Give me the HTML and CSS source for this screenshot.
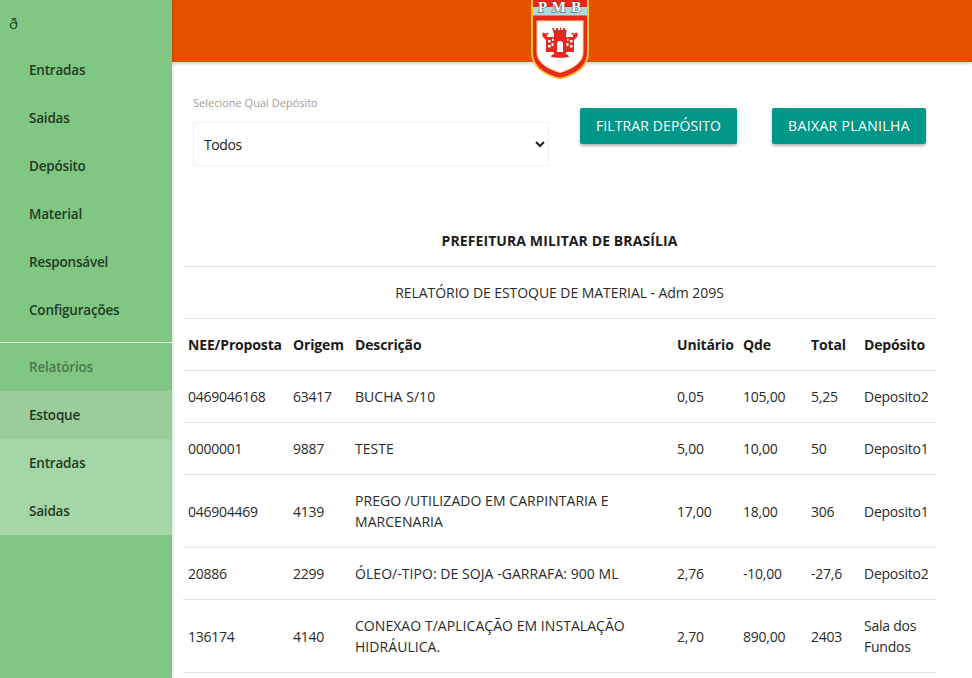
FILE: index.html
```html
<!DOCTYPE html>
<html lang="pt-BR">
<head>
<meta charset="utf-8">
<title>Relatório de Estoque</title>
<link rel="stylesheet" href="styles.css">
</head>
<body>
<div class="app">
  <aside class="sidebar">
    <div class="toggle">ð</div>
    <nav class="menu">
      <a class="item">Entradas</a>
      <a class="item">Saidas</a>
      <a class="item">Depósito</a>
      <a class="item">Material</a>
      <a class="item">Responsável</a>
      <a class="item">Configurações</a>
    </nav>
    <div class="divider"></div>
    <a class="item muted">Relatórios</a>
    <div class="submenu">
      <a class="item active">Estoque</a>
      <a class="item">Entradas</a>
      <a class="item">Saidas</a>
    </div>
  </aside>
  <div class="content">
    <header class="topbar">
      <svg class="crest" viewBox="0 0 58 80" width="58" height="80" aria-label="Brasão PMB">
        <path d="M0 0H58V52C58 68 44 76 29 79.500C14 76 0 68 0 52Z" fill="#f5c32c"/>
        <path d="M2 0H56V52C56 67 43 74.500 29 77.500C15 74.500 2 67 2 52Z" fill="#e8261a"/>
        <rect x="2" y="7" width="54" height="8.500" fill="#a9dbe0"/>
        <text class="crest-text" x="29" y="12" text-anchor="middle">P M B</text>
        <path d="M5.500 20.500H52.500V52C52.500 63 41 69.500 29 73C17 69.500 5.500 63 5.500 52Z" fill="#fbdf8a"/>
        <path d="M6.500 21.500H51.500V52C51.500 62 40.500 68.500 29 72C17.500 68.500 6.500 62 6.500 52Z" fill="#fff"/>
        <path d="M21 28L23 28V30H25V28H27V30H29V27.500H30V30H32V28H34V30H35.500V28L36 28L35 34V37H42V35L40 33.500L42 32.500L43 34L45 32.500L47 33.500L46 37L43 40V52H35V54H23V52H15V40L12 37L11 33.500L13 32.500L15 34L16 32.500L18 33.500L16 35V37H23V34Z" fill="#e3281f"/>
        <path d="M17 40h2.500v2.500h-2.500zM21 38.500h1.500v2.500h-1.500zM17 45h2.500v2.500h-2.500zM20.500 43h2v3h-2zM36 38.500h1.500v2.500h-1.500zM39 40h2.500v2.500h-2.500zM35.500 43h2v3h-2zM39 45h2.500v2.500h-2.500z" fill="#fff"/>
        <path d="M26 52V44A3 3 0 0 1 32 44V52Z" fill="#fff"/>
        <path d="M20 57C20 51.500 38 51.500 38 57C34 58 24 58 20 57Z" fill="#e3281f"/>
      </svg>
    </header>
    <main class="page">
      <form class="filters">
        <div class="field">
          <label class="field-label" for="deposito">Selecione Qual Depósito</label>
          <select class="field-select" id="deposito">
            <option>Todos</option>
          </select>
        </div>
        <button class="btn btn-filter" type="button">FILTRAR DEPÓSITO</button>
        <button class="btn btn-sheet" type="button">BAIXAR PLANILHA</button>
      </form>
      <table class="report">
        <colgroup>
          <col class="c1"><col class="c2"><col class="c3"><col class="c4"><col class="c5"><col class="c6"><col class="c7">
        </colgroup>
        <thead>
          <tr><th class="title" colspan="7">PREFEITURA MILITAR DE BRASÍLIA</th></tr>
          <tr><td class="subtitle" colspan="7">RELATÓRIO DE ESTOQUE DE MATERIAL - Adm 209S</td></tr>
          <tr class="head">
            <th class="first">NEE/Proposta</th><th>Origem</th><th>Descrição</th><th>Unitário</th><th>Qde</th><th>Total</th><th>Depósito</th>
          </tr>
        </thead>
        <tbody>
          <tr><td>0469046168</td><td>63417</td><td class="desc">BUCHA S/10</td><td>0,05</td><td>105,00</td><td>5,25</td><td>Deposito2</td></tr>
          <tr><td>0000001</td><td>9887</td><td class="desc">TESTE</td><td>5,00</td><td>10,00</td><td>50</td><td>Deposito1</td></tr>
          <tr><td>046904469</td><td>4139</td><td class="desc">PREGO /UTILIZADO EM CARPINTARIA E MARCENARIA</td><td>17,00</td><td>18,00</td><td>306</td><td>Deposito1</td></tr>
          <tr><td>20886</td><td>2299</td><td class="desc">ÓLEO/-TIPO: DE SOJA -GARRAFA: 900 ML</td><td>2,76</td><td>-10,00</td><td>-27,6</td><td>Deposito2</td></tr>
          <tr><td>136174</td><td>4140</td><td class="desc">CONEXAO T/APLICAÇÃO EM INSTALAÇÃO HIDRÁULICA.</td><td>2,70</td><td>890,00</td><td>2403</td><td>Sala dos Fundos</td></tr>
        </tbody>
      </table>
    </main>
  </div>
</div>
</body>
</html>
```

FILE: styles.css
```css
* { box-sizing: border-box; }
html, body { margin: 0; height: 678px; overflow: hidden; background: #fff; }
body { font-family: "Open Sans", "Noto Sans", sans-serif; font-size: 14px; color: #2a2a2a; letter-spacing: -0.25px; }

.app { display: flex; height: 678px; }

.sidebar { width: 172px; flex: none; background: #81c784; box-shadow: 1px 0 3px rgba(0,0,0,.15); position: relative; z-index: 2; }
.toggle { height: 46px; padding: 15px 0 0 9px; line-height: 16px; font-size: 15px; color: #1f3a22; }
.item { display: block; height: 48px; line-height: 48px; padding-left: 29px; font-size: 13.5px; font-weight: 600; color: #1f3a22; letter-spacing: -0.2px; }
.divider { height: 1px; background: #e8f5e9; margin-top: 8px; }
.muted { color: #47794c; }
.submenu { background: #a5d6a7; }
.active { background: #9ccc9c; }

.content { flex: 1; min-width: 0; }
.topbar { height: 62px; background: #e65100; box-shadow: 0 1px 4px rgba(0,0,0,.25); position: relative; z-index: 1; }
.crest { position: absolute; left: 359px; top: 0; }
.crest-text { font-family: "Liberation Serif", serif; font-weight: 700; font-size: 15px; fill: #fff; stroke: #4a4a4a; stroke-width: 1px; paint-order: stroke; letter-spacing: .8px; }

.page { padding: 0 36px 0 11px; }
.filters { display: flex; align-items: flex-start; padding: 34px 10px 0 10px; height: 153px; }
.field { width: 356px; flex: none; }
.field-label { display: block; font-size: 11px; line-height: 14px; color: #9e9e9e; margin-bottom: 12px; letter-spacing: 0; }
.field-select { display: block; width: 100%; height: 44px; border: 1px solid #f0f0f0; border-radius: 2px; background: #fff; padding: 0 6px; font: inherit; font-size: 14px; color: #212121; letter-spacing: -0.4px; }
.btn { height: 36px; border: 0; border-radius: 2px; background: #009688; color: #fff; font: inherit; font-size: 14px; letter-spacing: .1px; box-shadow: 0 2px 3px rgba(0,0,0,.3); margin-top: 12px; padding: 0 0 2px; }
.btn-filter { width: 157px; margin-left: 31px; }
.btn-sheet { width: 154px; margin-left: 35px; letter-spacing: .35px; }

.report { width: 753px; border-collapse: collapse; table-layout: fixed; }
.c1 { width: 105px; } .c2 { width: 62px; } .c3 { width: 322px; } .c4 { width: 66px; } .c5 { width: 68px; } .c6 { width: 53px; } .c7 { width: 77px; }
.report td, .report th { padding: 15px 5px; line-height: 21px; text-align: left; vertical-align: middle; border-bottom: 1px solid #e0e0e0; font-size: 14px; }
.report td { font-weight: 400; }
.report th { font-weight: 700; color: #1b1b1b; letter-spacing: -0.15px; }
.report .title { text-align: center; letter-spacing: .1px; }
.report .subtitle { text-align: center; letter-spacing: -0.06px; }
.report .desc { letter-spacing: .05px; }
.head th { border-top: 1px solid #c4c4c4; }
.head th.first { border-top: 1px solid #e0e0e0; }
```
